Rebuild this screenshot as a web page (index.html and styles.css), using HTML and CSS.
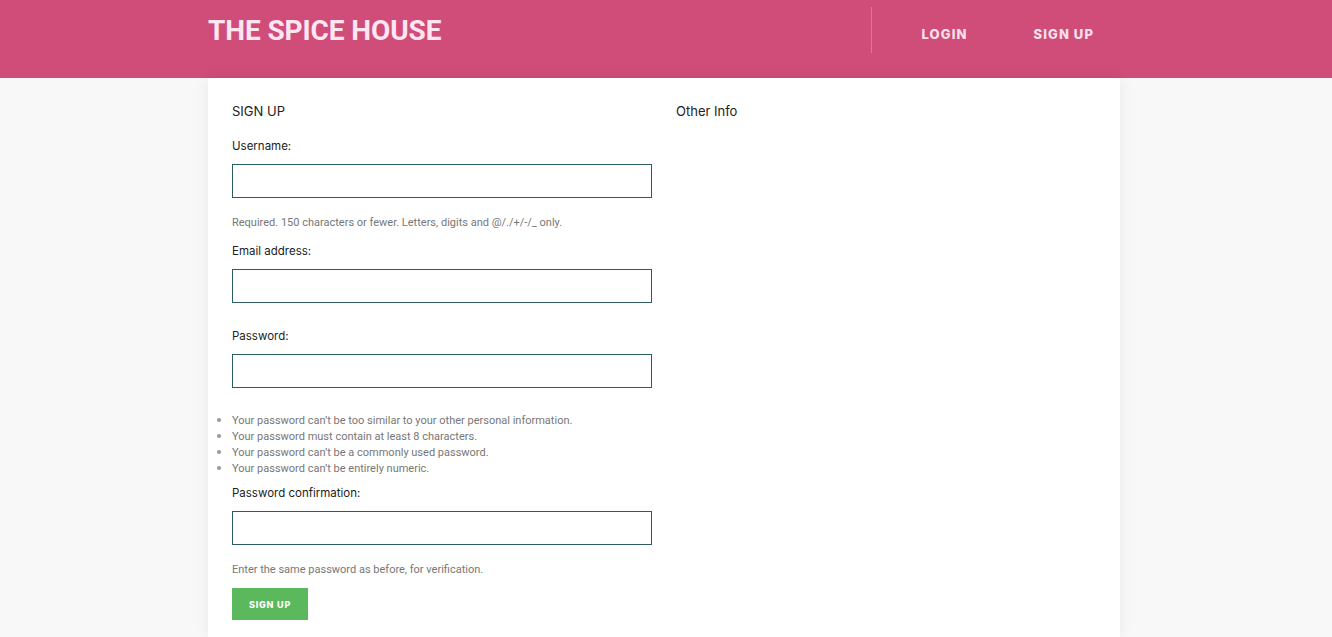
FILE: index.html
```html
<!DOCTYPE html>
<html lang="en">
<head>
<meta charset="utf-8">
<title>The Spice House - Sign Up</title>
<link rel="stylesheet" href="styles.css">
</head>
<body>
<header class="topbar">
  <div class="topbar-inner">
    <a class="brand" href="#">THE SPICE HOUSE</a>
    <nav class="nav">
      <a href="#" class="nav-link">LOGIN</a>
      <a href="#" class="nav-link">SIGN UP</a>
    </nav>
  </div>
</header>
<main class="panel">
  <section class="col">
    <h2 class="title">SIGN UP</h2>
    <form class="form">
      <label class="label first">Username:</label>
      <input class="field" type="text">
      <p class="help">Required. 150 characters or fewer. Letters, digits and @/./+/-/_ only.</p>
      <label class="label after-help">Email address:</label>
      <input class="field" type="email">
      <label class="label after-field">Password:</label>
      <input class="field" type="password">
      <ul class="rules">
        <li>Your password can’t be too similar to your other personal information.</li>
        <li>Your password must contain at least 8 characters.</li>
        <li>Your password can’t be a commonly used password.</li>
        <li>Your password can’t be entirely numeric.</li>
      </ul>
      <label class="label after-list">Password confirmation:</label>
      <input class="field" type="password">
      <p class="help">Enter the same password as before, for verification.</p>
      <button class="btn" type="button">SIGN UP</button>
    </form>
  </section>
  <section class="col">
    <h2 class="title">Other Info</h2>
  </section>
</main>
</body>
</html>
```
FILE: styles.css
```css
* { box-sizing: border-box; }
html, body { margin: 0; padding: 0; }
body {
  background: #f9f8f9;
  font-family: Inter, "Open Sans", sans-serif;
  color: #222;
  height: 637px;
  overflow: hidden;
}
.topbar {
  background: #cf4d78;
  height: 78px;
}
.topbar-inner {
  width: 912px;
  margin-left: calc(50% - 458px);
  height: 78px;
  display: flex;
  align-items: flex-start;
  justify-content: space-between;
}
.brand {
  font-family: Roboto, "Liberation Sans", sans-serif;
  font-weight: 700;
  font-size: 28px;
  line-height: 30px;
  margin-top: 16px;
  color: #fde6f1;
  text-decoration: none;
  letter-spacing: -0.1px;
}
.nav {
  display: flex;
  margin-top: 7px;
  height: 46px;
  border-left: 1px solid #e07499;
  padding-left: 50px;
  padding-top: 7px;
  margin-right: 26px;
  gap: 66px;
  align-items: center;
}
.nav-link {
  font-family: Inter, "Open Sans", sans-serif;
  font-weight: 800;
  font-size: 13px;
  letter-spacing: 1.1px;
  color: #fbe1ee;
  text-decoration: none;
}
.panel {
  width: 912px;
  margin-left: calc(50% - 458px);
  background: #fff;
  box-shadow: 0 0 14px rgba(0,0,0,0.07);
  height: 559px;
  padding: 23px 24px 0;
  display: grid;
  grid-template-columns: 444px 1fr;
}
.title {
  margin: 0;
  font-weight: 400;
  font-size: 13px;
  line-height: 20px;
  color: #222;
}
.form { display: flex; flex-direction: column; align-items: flex-start; }
.label {
  font-size: 11.5px;
  line-height: 16px;
  color: #222;
}
.label.first { margin-top: 17px; }
.label.after-help { margin-top: 12px; }
.label.after-field { margin-top: 25px; }
.label.after-list { margin-top: 9px; }
.field {
  width: 420px;
  height: 34px;
  margin-top: 10px;
  border: 1px solid #2b5d60;
  border-radius: 0;
  background: #fff;
  padding: 0 8px;
  font: inherit;
  outline: none;
}
.help {
  margin: 17px 0 0;
  font-family: Roboto, "Liberation Sans", sans-serif;
  font-size: 11px;
  line-height: 16px;
  color: #777;
}
.rules {
  margin: 24px 0 0;
  padding: 0;
  list-style: disc outside;
  font-family: Roboto, "Liberation Sans", sans-serif;
  font-size: 11px;
  line-height: 16px;
  color: #777;
}
.rules li { height: 16px; }
.rules li::marker { color: #999; font-size: 13px; }
.btn {
  margin-top: 10px;
  width: 76px;
  height: 32px;
  background: #5cb85c;
  border: none;
  border-radius: 0;
  color: #fff;
  font-family: Inter, "Open Sans", sans-serif;
  font-weight: 800;
  font-size: 9px;
  letter-spacing: 0.8px;
  padding: 0;
}
```
